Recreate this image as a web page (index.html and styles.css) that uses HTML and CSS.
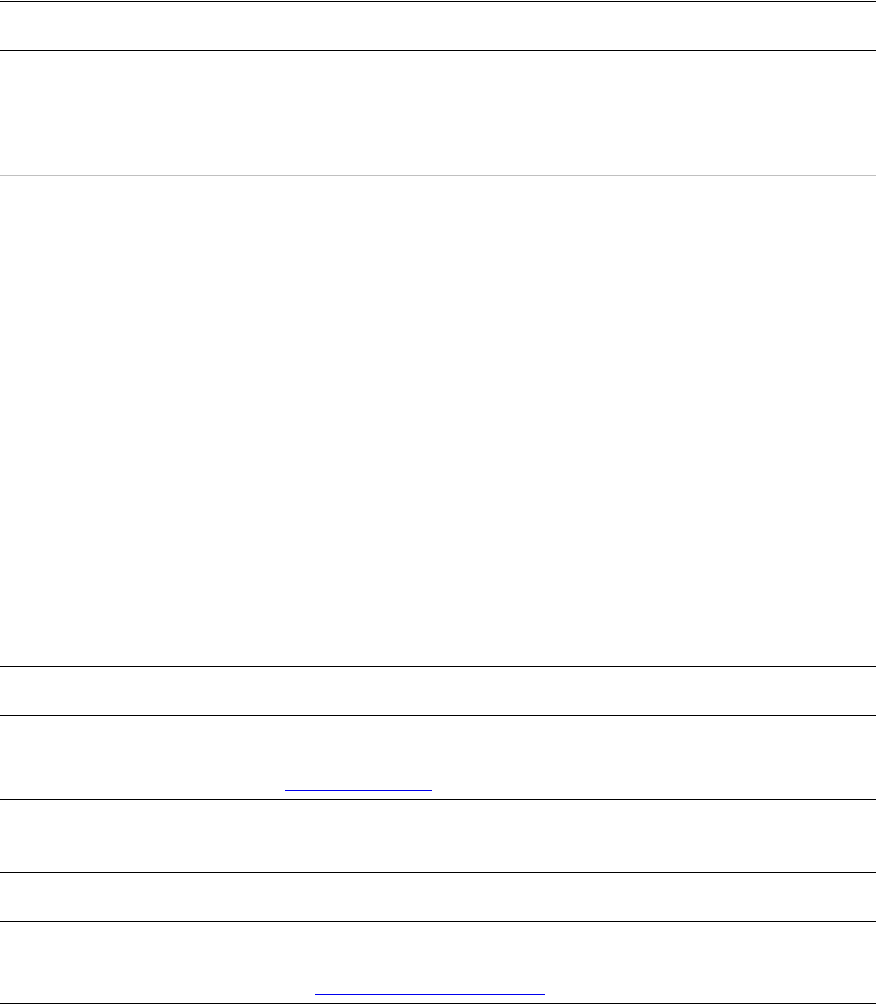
FILE: index.html
```html
<!DOCTYPE html>
<html lang="en">
<head>
  <meta charset="UTF-8" />
  <meta name="viewport" content="width=device-width, initial-scale=1.0"/>
  <title>Page</title>
  <link rel="stylesheet" href="styles.css">
</head>
<body>

<!-- Header -->
<div class="row row-head"></div>
<div class="row row-intro"></div>

<!-- Main body -->
<div class="row row-main"></div>

<!-- Entries -->
<div class="row row-title"></div>
<div class="row row-entry">
  <span class="link link-first"></span>
</div>
<div class="row row-note"></div>
<div class="row row-title"></div>
<div class="row row-entry row-last">
  <span class="link link-second"></span>
</div>

</body>
</html>
```

FILE: styles.css
```css
* { margin: 0; padding: 0; box-sizing: border-box; }
body {
  font-family: 'Liberation Sans', Arial, sans-serif;
  background: #fff;
  padding-top: 1px;
}

.row {
  border-top: 1px solid #000;
  display: flex;
  flex-direction: column;
  justify-content: flex-end;
}

.row-head { height: 49px; }
.row-intro { height: 125px; }

.row-main {
  height: 491px;
  border-top-color: #c0c0c0;
}

.row-title { height: 49px; }
.row-note { height: 73px; }

.row-entry {
  height: 84px;
  padding-bottom: 8px;
}

.row-last {
  height: 83px;
  border-bottom: 1px solid #000;
}

.link {
  display: block;
  height: 1px;
  background: #0000ee;
}

.link-first {
  margin-left: 285px;
  width: 147px;
}

.link-second {
  margin-left: 315px;
  width: 230px;
}
```
